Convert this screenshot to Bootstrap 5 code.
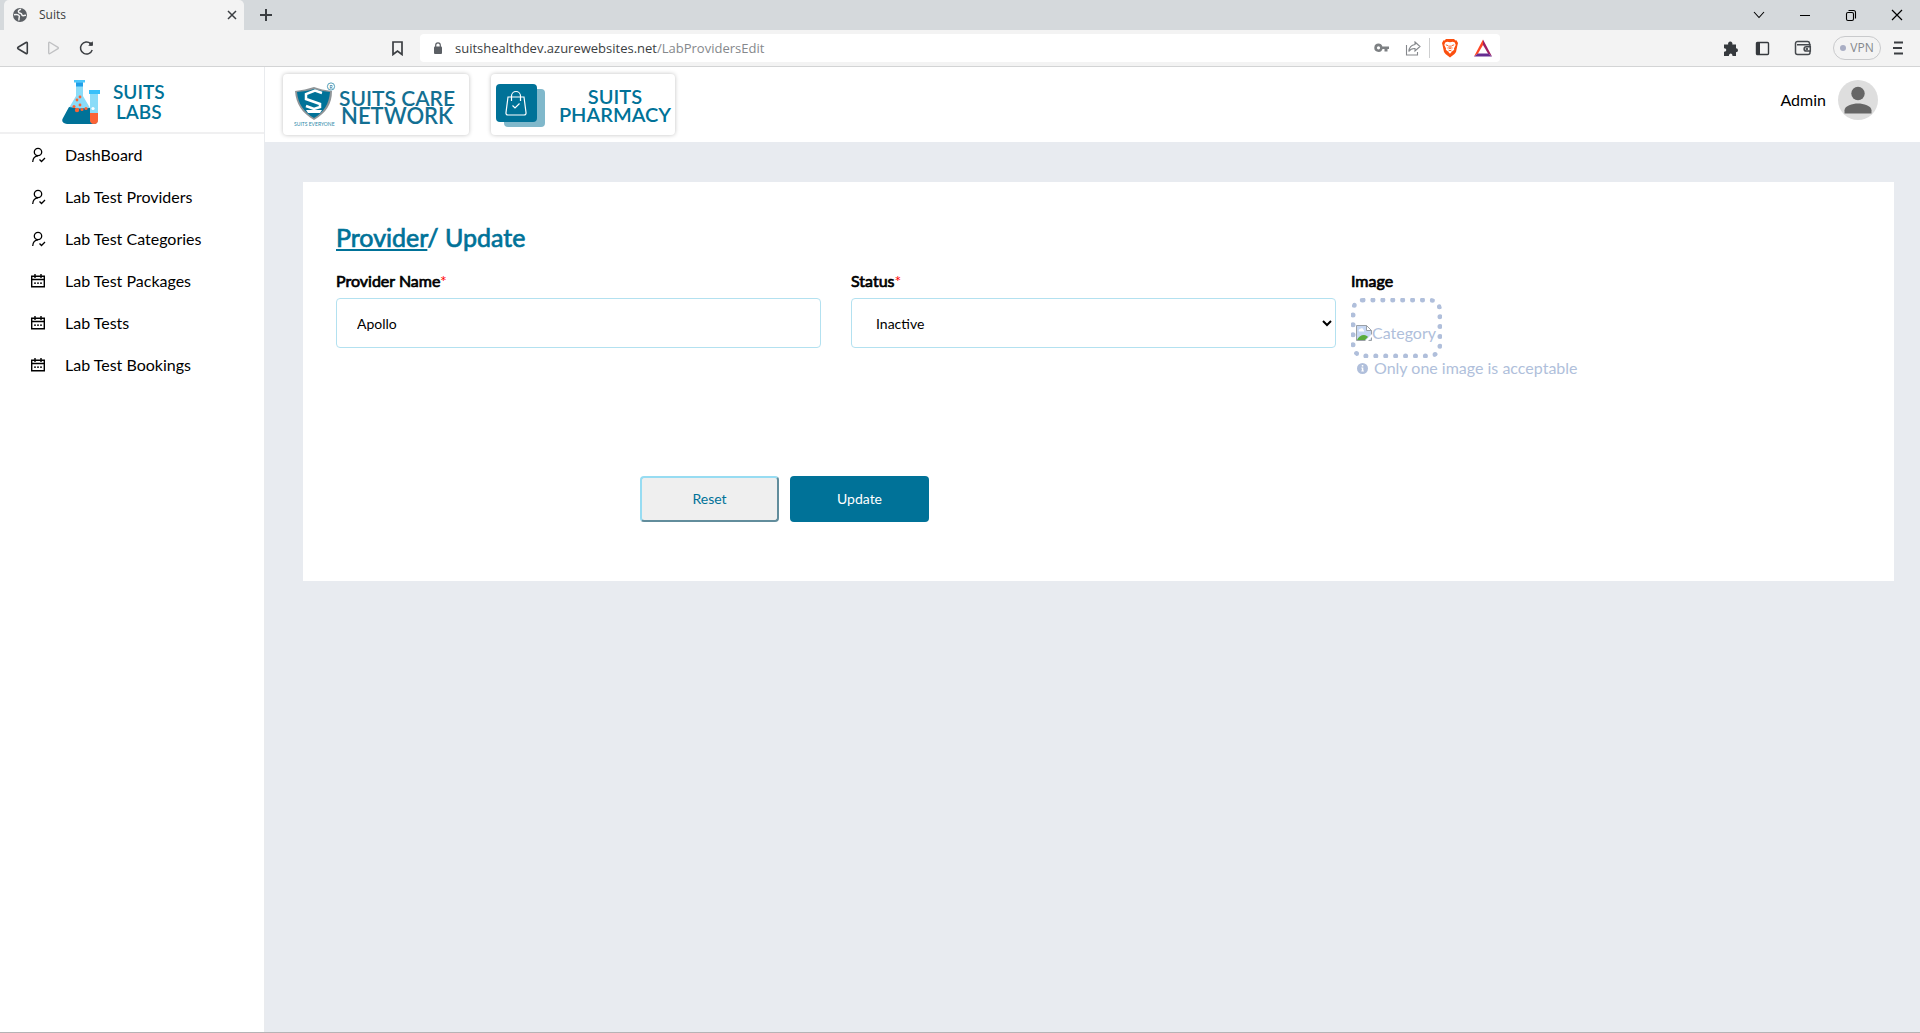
<!DOCTYPE html>
<html lang="en">
<head>
<meta charset="utf-8">
<meta name="viewport" content="width=device-width, initial-scale=1">
<title>Suits</title>
<link href="https://cdn.jsdelivr.net/npm/bootstrap@5.3.0/dist/css/bootstrap.min.css" rel="stylesheet">
<style>
  :root { --teal: #007298; --ice: #b3e1f0; --haze: #b0bfdb; --canvas: #e8ebf0; }
  body { font-family: Lato, "Open Sans", sans-serif; font-size: 16px; line-height: 24px; color: #000; background: var(--canvas); }
  svg { display: block; flex: none; }
  .page { border-bottom: 1px solid #b5b3b5; }
  .chrome { font-family: "Open Sans", "Noto Sans", sans-serif; color: #3b3e42; }
  .chrome button { background: none; border: 0; padding: 0; color: inherit; }
  .tabstrip { height: 30px; background: #d5d9dc; padding: 0 16px 0 4px; }
  .tabstrip .tab { width: 240px; background: #f3f3f3; border-radius: 5px 5px 0 0; padding: 0 7px 0 9px; font-size: 12px; }
  .winctl { gap: 32px; color: #000; }
  .toolbar { height: 37px; background: #f3f3f3; border-bottom: 1px solid #d3d4d5; padding: 0 17px 0 15px; }
  .navkeys { gap: 18px; width: 377px; }
  .address { flex: 0 1 1080px; height: 28px; background: #fff; border-radius: 4px; padding: 0 8px 0 13px; margin-left: 17px; }
  .address-text { font-size: 13px; color: #3b3e42; }
  .address-text span { color: #85888c; }
  .chrome .vpn { border: 1px solid #c9cacc; border-radius: 12px; height: 24px; width: 48px; font-size: 12px; color: #85888c; }
  .vpn-dot { width: 6px; height: 6px; border-radius: 50%; background: #a9aec4; }
  .sidebar { width: 265px; background: #fff; border-right: 1px solid #e9ebee; }
  .brand-lab { height: 67px; border-bottom: 2px solid #f0f0f1; padding: 5px 0 0 62px; gap: 13px; }
  .wordmark { color: var(--teal); font-weight: 600; text-align: center; text-decoration: none; }
  .brand-lab .wordmark { font-size: 19px; line-height: 20px; }
  .sidenav a { color: #000; height: 42px; padding: 0 0 0 30px; gap: 19px; }
  .topbar { height: 75px; background: #fff; padding: 0 42px 0 18px; }
  .account { padding-bottom: 10px; }
  .apps { gap: 22px; }
  .apptile { height: 61px; border-radius: 4px; box-shadow: 0 0 4px rgba(0,0,0,.25); background: #fff; text-decoration: none; }
  .tile-care { width: 186px; padding: 0 14px 0 11px; }
  .tile-pharm { width: 184px; padding: 1px 4px 0 5px; }
  .tile-care .wordmark { font-size: 21px; line-height: 18px; color: #136f92; padding-top: 5px; }
  .tile-care .wide-line { font-size: 22px; }
  .tile-pharm .wordmark { font-size: 20px; line-height: 18px; }
  .content { padding: 40px 26px 0 38px; }
  .panel { background: #fff; padding: 39px 33px 59px; }
  .soft-bold { font-weight: 400; -webkit-text-stroke: .7px currentColor; }
  .page-title { font-size: 25px; line-height: 32px; color: var(--teal); margin: 0 0 16px; }
  .page-title a { color: inherit; }
  .fields { gap: 30px; }
  .field-name { display: block; margin-bottom: 5px; }
  .field-box { width: 485px; height: 50px; border: 1px solid var(--ice); border-radius: 4px; font-size: 14px; color: #000; background-color: #fff; padding: 0 20px; }
  select.field-box { appearance: auto; }
  .req { color: #f00; }
  .picture-col { margin-left: -15px; color: var(--haze); }
  .drop { width: 91px; height: 60px; border: 5px dotted var(--haze); border-radius: 12px; padding-top: 10px; white-space: nowrap; }
  .hint { padding-left: 6px; gap: 6px; line-height: 20px; }
  .actions { padding: 98px 0 0 304px; gap: 11px; }
  .act { width: 139px; height: 46px; border-radius: 4px; font-size: 14px; padding: 0; }
  .act-reset { background: #efefef; color: var(--teal); border: 2px solid; border-color: #97dcf2 #628d9c #628d9c #97dcf2; }
  .act-update { background: var(--teal); color: #fff; border: 0; }
</style>
</head>
<body>
<div class="page d-flex flex-column min-vh-100">
  <header class="chrome">
    <div class="tabstrip d-flex justify-content-between">
      <div class="d-flex align-items-center">
        <div class="tab d-flex align-items-center align-self-stretch">
          <svg width="14" height="14" viewBox="0 0 14 14"><circle cx="7" cy="7" r="7" fill="#5b5f64"/><path d="M8 1.300C5.500 2.200 4.800 3.300 5.800 4.400S8.600 5 8.800 6.600 11 7.600 13 7.200M1 6.800c2.200-.4 4.500-.2 5.200 1S5.500 9.900 6 12.500" fill="none" stroke="#f3f3f3" stroke-width="1.500"/></svg>
          <span class="ms-2 ps-1">Suits</span>
          <button class="ms-auto" aria-label="Close tab"><svg width="10" height="10" viewBox="0 0 10 10" stroke="currentColor" stroke-width="1.500"><path d="M1 1l8 8M9 1L1 9"/></svg></button>
        </div>
        <button class="ms-3" aria-label="New tab"><svg width="12" height="12" viewBox="0 0 12 12" stroke="currentColor" stroke-width="2"><path d="M6 0v12M0 6h12"/></svg></button>
      </div>
      <div class="winctl d-flex align-items-center">
        <button aria-label="Search tabs"><svg width="14" height="14" viewBox="0 0 14 14" fill="none" stroke="currentColor" stroke-width="1.100"><path d="M2 4l5 5.500L12 4"/></svg></button>
        <button aria-label="Minimize"><svg width="14" height="14" viewBox="0 0 14 14"><path d="M2 7h10v1H2z"/></svg></button>
        <button aria-label="Restore"><svg width="14" height="14" viewBox="0 0 14 14" fill="none" stroke="currentColor" stroke-width="1.100"><rect x="2.500" y="4.500" width="7" height="8" rx="1.500"/><path d="M4.500 2.500h5a2 2 0 0 1 2 2v6"/></svg></button>
        <button aria-label="Close"><svg width="14" height="14" viewBox="0 0 14 14" stroke="currentColor" stroke-width="1.200"><path d="M2 2l10 10M12 2L2 12"/></svg></button>
      </div>
    </div>
    <div class="toolbar d-flex align-items-center">
      <div class="navkeys d-flex align-items-center flex-shrink-0">
        <button aria-label="Back"><svg width="14" height="16" viewBox="0 0 14 16" fill="none" stroke="currentColor" stroke-width="1.600" stroke-linejoin="round"><path d="M11 2.500c.8-.5 1.300 0 1.300.7v9.600c0 .7-.5 1.200-1.300.7L3 8.700a.9.900 0 0 1 0-1.400z"/></svg></button>
        <button aria-label="Forward"><svg width="14" height="16" viewBox="0 0 14 16" fill="none" stroke="#c0c1c3" stroke-width="1.400" stroke-linejoin="round"><path d="M3 2.500c-.8-.5-1.300 0-1.300.7v9.600c0 .7.500 1.200 1.300.7l8-4.800a.9.900 0 0 0 0-1.400z"/></svg></button>
        <button aria-label="Reload"><svg width="15" height="16" viewBox="0 0 15 16" fill="none" stroke="currentColor" stroke-width="1.500"><path d="M13.200 10A6 6 0 1 1 11.600 3.600"/><path d="M9.200 5.800h4.600V1.200z" fill="currentColor" stroke="none"/><circle cx="12" cy="4" r="1.800" fill="currentColor" stroke="none"/></svg></button>
      </div>
      <button aria-label="Bookmark"><svg width="11" height="15" viewBox="0 0 11 15" fill="none" stroke="currentColor" stroke-width="1.700"><path d="M1 1h9v12.500L5.500 10 1 13.500z"/></svg></button>
      <div class="address d-flex align-items-center">
        <svg width="10" height="12" viewBox="0 0 10 12"><rect x="1" y="4.500" width="8" height="7.500" rx="1" fill="#5b5f64"/><path d="M2.700 5V3.200a2.300 2.300 0 0 1 4.600 0V5" fill="none" stroke="#5b5f64" stroke-width="1.200"/></svg>
        <div class="address-text ms-2 ps-1">suitshealthdev.azurewebsites.net<span>/LabProvidersEdit</span></div>
        <svg class="ms-auto" width="15" height="10" viewBox="0 0 15 10"><path d="M4.500.500a4.200 4.200 0 1 0 4 5.500h2v2.500h3V6H15V3.500H8.400A4.200 4.200 0 0 0 4.500.500zm0 2.700a1.600 1.600 0 1 1 0 3.200 1.600 1.600 0 0 1 0-3.200z" fill="#7d8083"/></svg>
        <svg class="ms-3" width="16" height="15" viewBox="0 0 16 15" fill="none" stroke="#85888c" stroke-width="1.100"><path d="M1.500 4v10h11v-3M10 1l5 4.500L10 10V7.500c-3-.2-4.800.8-6.200 3C4.200 6.500 6.200 4 10 3.500z"/></svg>
        <span class="vr mx-2 my-1"></span>
        <svg class="ms-1" width="16" height="20" viewBox="0 0 16 20"><path d="M4 1h8l1.500 1.500 1-.2L16 5l-.5 2L14 14l-1.500 2L8 19.500 3.500 16 2 14 .500 7 0 5l1.500-2.700 1 .2z" fill="#fb4f0f"/><path d="M3.200 4.500l2-.7 2.800.5 2.800-.5 2 .7.900 2.500-1.700 3.500.2 1.300-1.900 1.400L8 15.800 5.700 13.200l-1.900-1.400.2-1.300L2.300 7z" fill="#fff"/><path d="M3.800 6.800l2.500.9M12.200 6.800l-2.500.9M7.200 7.500L7 10l1 .7 1-.7-.2-2.500M5.500 10l1 .8M10.500 10l-1 .8M6.500 13L8 12.300l1.500.7" fill="none" stroke="#fb4f0f" stroke-width=".9"/></svg>
        <svg class="ms-3" width="18" height="18" viewBox="0 0 18 18"><path d="M9 .500V6L4 14.500 0 17.500z" fill="#ff4724"/><path d="M9 .500l9 17-4-3L9 6z" fill="#9e1f63"/><path d="M0 17.500l4-3h10l4 3z" fill="#662d91"/></svg>
      </div>
      <div class="d-flex align-items-center ms-auto">
        <svg width="16" height="17" viewBox="0 0 16 17"><path d="M1 4.500h4.200A2.200 2.200 0 1 1 9.300 4.500H13V8.300a2 2 0 1 1 0 4V16H9.500c.2-3.400-3.700-3.400-3.600 0H1v-4.200c3 .2 3-3.700 0-3.500z" fill="#35393d"/></svg>
        <svg class="ms-3" width="15" height="15" viewBox="0 0 15 15"><rect x="1.500" y="1.500" width="12" height="12" rx="1" fill="none" stroke="#35393d" stroke-width="1.400"/><path d="M1.500 1.500H5v12H1.500z" fill="#35393d"/></svg>
        <svg class="ms-4" width="18" height="16" viewBox="0 0 18 16" fill="none" stroke="#45494d" stroke-width="1.500"><path d="M15.500 4.500V3.200A2 2 0 0 0 13.500 1.500h-10a2 2 0 0 0-2 2v9a2 2 0 0 0 2 2h10.500a2 2 0 0 0 2-2v-1M16 6.500v-1.700H3M16.300 6.700h-4a2.200 2.200 0 0 0 0 4.400h4z"/><circle cx="12.800" cy="9" r=".5"/></svg>
        <button class="vpn d-flex align-items-center justify-content-center gap-1" style="margin-left:21px"><span class="vpn-dot"></span>VPN</button>
        <button class="ms-2 ps-1" aria-label="Menu"><svg width="10" height="14" viewBox="0 0 10 14" stroke="currentColor" stroke-width="1.800"><path d="M1 1.500h9M0 7h9M1 12.500h9"/></svg></button>
      </div>
    </div>
  </header>

  <div class="d-flex flex-grow-1">
    <aside class="sidebar flex-shrink-0">
      <div class="brand-lab d-flex align-items-center">
        <svg width="38" height="46" viewBox="0 0 38 46"><path d="M14 3h7v14l10 17H4l10-17z" fill="#8bdcf8"/><path d="M12 1h11v2.500H12z" fill="#4cc7fb"/><path d="M14 3.500h7v4h-7z" fill="#1f9fe8"/><path d="M7 28l10 1.500L28 29l7 11c1.500 3-.5 5-3 5H5c-4 0-6-3-4-6z" fill="#007298"/><path d="M28 15h8v25a4 4 0 0 1-8 0z" fill="#8bdcf8"/><path d="M27 11h11v4H27z" fill="#37c0fa"/><path d="M28 34h8v7a4 4 0 0 1-8 0z" fill="#fb6335"/><g fill="#fb6335"><circle cx="18" cy="18" r="1.400"/><circle cx="15" cy="21" r="1.400"/><circle cx="18" cy="26" r="1.400"/><circle cx="12" cy="27.500" r="1.500"/><circle cx="15" cy="31" r="2.200"/><circle cx="20" cy="30.500" r="1.500"/><circle cx="24" cy="29.500" r="1.600"/></g><circle cx="31" cy="29.500" r="1.600" fill="#fff"/></svg>
        <a class="wordmark" href="#">SUITS<br>LABS</a>
      </div>
      <svg class="d-none"><defs>
        <g id="i-user" fill="none" stroke="#000" stroke-width="1.300"><circle cx="8" cy="5" r="3.700"/><path d="M2.700 15c.2-4 2.300-6 5.300-6.200M9.500 12.500l2 2 3.500-3.500"/></g>
        <g id="i-cal"><path d="M1.700 3.200h12.600v10.600H1.700zM1.700 6.500h12.600M5 1v4M11 1v4" fill="none" stroke="#000" stroke-width="1.400"/><path d="M4 9.500h2v1.300H4zM7 9.500h2v1.300H7zM10 9.500h2v1.300h-2z"/></g>
      </defs></svg>
      <nav class="sidenav nav flex-column">
        <a class="d-flex align-items-center text-decoration-none" href="#"><svg width="16" height="16"><use href="#i-user"/></svg>DashBoard</a>
        <a class="d-flex align-items-center text-decoration-none" href="#"><svg width="16" height="16"><use href="#i-user"/></svg>Lab Test Providers</a>
        <a class="d-flex align-items-center text-decoration-none" href="#"><svg width="16" height="16"><use href="#i-user"/></svg>Lab Test Categories</a>
        <a class="d-flex align-items-center text-decoration-none" href="#"><svg width="16" height="16"><use href="#i-cal"/></svg>Lab Test Packages</a>
        <a class="d-flex align-items-center text-decoration-none" href="#"><svg width="16" height="16"><use href="#i-cal"/></svg>Lab Tests</a>
        <a class="d-flex align-items-center text-decoration-none" href="#"><svg width="16" height="16"><use href="#i-cal"/></svg>Lab Test Bookings</a>
      </nav>
    </aside>

    <div class="flex-grow-1">
      <div class="topbar d-flex align-items-center justify-content-between">
        <div class="apps d-flex">
          <a class="apptile tile-care d-flex align-items-center justify-content-between" href="#">
            <svg width="42" height="46" viewBox="0 0 42 46"><path d="M1 9C8 8 14 7 20 5c5 2 11 3 18 4 0 13-6 22-18 29C8 31 2 22 1 9z" fill="#8f9598"/><path d="M3 10c6-1 12-1 17-3 6 2 11 2 16 3-1 12-6 20-16 26C10 30 4 22 3 10z" fill="#007298"/><path d="M28 11l-7-2.500-9 3.500v5l14 5v3l-6 2-8-3" fill="none" stroke="#fff" stroke-width="2.500"/><path d="M12 28h16l-2 3H14z" fill="#fff"/><circle cx="37" cy="4.500" r="3.600" fill="none" stroke="#2b88a8" stroke-width=".8"/><text x="37" y="6.500" text-anchor="middle" font-size="5" fill="#136f92">R</text><text x="0" y="44" font-size="5" fill="#2b88a8">SUITS EVERYONE</text></svg>
            <span class="wordmark">SUITS CARE<br><span class="wide-line">NETWORK</span></span>
          </a>
          <a class="apptile tile-pharm d-flex align-items-center justify-content-between" href="#">
            <svg width="49" height="43" viewBox="0 0 49 43"><rect x="8" y="5" width="41" height="38" rx="4" fill="#80b8cb"/><rect width="41" height="38" rx="4" fill="#007298"/><g fill="none" stroke="#fff" stroke-width="1.200"><path d="M12 13h16l2 15.500c.2 1.500-.5 2.500-2 2.500H12c-1.500 0-2.200-1-2-2.500z"/><path d="M15.500 17v-5a4.500 4.500 0 0 1 9 0v5M16.500 21.500l2.500 2.500 4.500-4.500"/></g></svg>
            <span class="wordmark">SUITS<br>PHARMACY</span>
          </a>
        </div>
        <div class="account d-flex align-items-center">
          <span class="me-2 pe-1">Admin</span>
          <svg width="40" height="40" viewBox="0 0 40 40"><circle cx="20" cy="20" r="20" fill="#dedede"/><circle cx="20" cy="13.500" r="6.700" fill="#666"/><path d="M6.500 33.500v-3.300c0-4.500 8-6.800 13.500-6.800s13.500 2.300 13.500 6.800v3.300z" fill="#666"/></svg>
        </div>
      </div>

      <main class="content">
        <form class="panel">
          <h1 class="page-title soft-bold"><a href="#">Provider</a>/ Update</h1>
          <div class="fields d-flex">
            <div>
              <label class="field-name" for="pname"><span class="soft-bold">Provider Name</span><span class="req">*</span></label>
              <input class="field-box" id="pname" type="text" value="Apollo">
            </div>
            <div>
              <label class="field-name" for="status"><span class="soft-bold">Status</span><span class="req">*</span></label>
              <select class="field-box" id="status"><option>Inactive</option><option>Active</option></select>
            </div>
            <div class="picture-col">
              <div class="field-name soft-bold text-black">Image</div>
              <div class="drop d-flex align-items-center">
                <svg width="16" height="16" viewBox="0 0 16 16"><path d="M.500.500h10l5 5V15.500H.500z" fill="#c6d7f3" stroke="#9aa0a6"/><path d="M10.500.500v5h5z" fill="#fff" stroke="#9aa0a6"/><path d="M3 6.500a1.500 1.500 0 0 1 1-2.500 2 2 0 0 1 3.500 1A1 1 0 0 1 8 6.500z" fill="#fff"/><path d="M1 15c1-3 4-5 7-5 2 0 3 1 4 2l-3 3z" fill="#5aac3c"/><path d="M9 16l7-7v3l-4 4z" fill="#fff"/></svg>Category
              </div>
              <div class="hint d-flex align-items-center"><svg width="11" height="11" viewBox="0 0 11 11"><circle cx="5.500" cy="5.500" r="5.500" fill="#b0bfdb"/><path d="M4.800 2h1.500v1.400H4.800zM4.300 4.500h2v3h.6v1H4.300v-1h.6v-2h-.6z" fill="#fff"/></svg>Only one image is acceptable</div>
            </div>
          </div>
          <div class="actions d-flex">
            <button type="reset" class="act act-reset">Reset</button>
            <button type="button" class="act act-update">Update</button>
          </div>
        </form>
      </main>
    </div>
  </div>
</div>
<script src="https://cdn.jsdelivr.net/npm/bootstrap@5.3.0/dist/js/bootstrap.bundle.min.js"></script>
</body>
</html>
